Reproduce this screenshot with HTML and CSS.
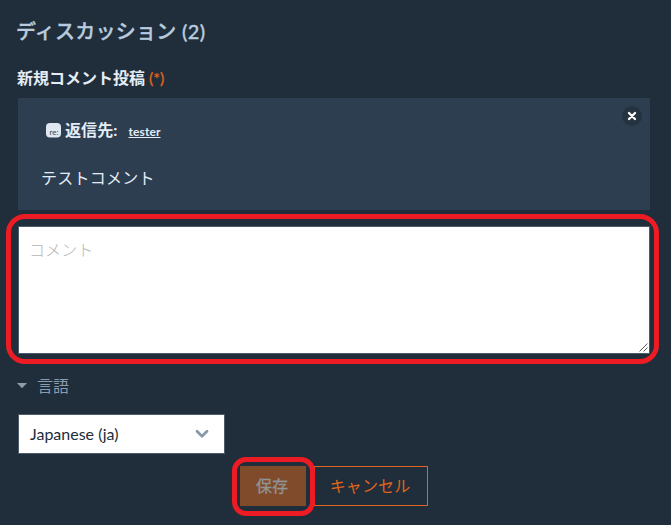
FILE: index.html
```html
<!DOCTYPE html>
<html lang="ja">
<head>
<meta charset="utf-8">
<title>ディスカッション</title>
<link rel="stylesheet" href="styles.css">
</head>
<body>
<main class="discussion">
  <h2 class="title">ディスカッション <span class="count">(2)</span></h2>
  <form class="form">
    <div class="label">新規コメント投稿 <span class="required">(*)</span></div>
    <section class="quote">
      <div class="reply">
        <svg class="reply-icon" width="15" height="15" viewBox="0 0 15 15"><rect width="15" height="14.5" rx="4" fill="#dfe7f0"/><text x="3.5" y="11.5" class="reply-glyph">re:</text></svg>
        <span class="reply-label">返信先:</span>
        <a class="user">tester</a>
      </div>
      <p class="quote-text">テストコメント</p>
      <button type="button" class="close" aria-label="閉じる">
        <svg width="20" height="20" viewBox="0 0 20 20"><circle cx="10" cy="10" r="10" fill="#253341"/><path d="M7 7l6 6M13 7l-6 6" stroke="#fff" stroke-width="2.3" stroke-linecap="round"/></svg>
      </button>
    </section>
    <div class="comment">
      <div class="field">コメント
        <svg class="grip" width="9" height="9" viewBox="0 0 9 9"><path d="M.5 8.5l8-8M4.5 8.5l4-4" stroke="#555" stroke-width="1"/></svg>
      </div>
      <span class="ring ring-comment"></span>
    </div>
    <div class="language"><svg width="10" height="6" viewBox="0 0 10 6"><path d="M0 0h10L5 5.3z" fill="#8b9caf"/></svg><span>言語</span></div>
    <div class="select"><span>Japanese (ja)</span><svg width="14" height="10" viewBox="0 0 14 10"><path d="M2 2.3l5 5 5-5" fill="none" stroke="#8798aa" stroke-width="2.7" stroke-linecap="round" stroke-linejoin="round"/></svg></div>
    <div class="actions">
      <div class="save-wrap"><button type="button" class="button save">保存</button><span class="ring ring-save"></span></div>
      <button type="button" class="button cancel">キャンセル</button>
    </div>
  </form>
</main>
</body>
</html>
```
FILE: styles.css
```css
* { box-sizing: border-box; }
body {
  margin: 0;
  background: #202d3a;
  color: #e4edf6;
  font: 16px/24px Lato, "Noto Sans CJK JP", sans-serif;
}
.discussion { height: 525px; padding: 16px 21px 0 18px; overflow: hidden; }
.title {
  margin: 0 0 0 -2px;
  color: #b8cbdf;
  font-size: 20px;
  line-height: 30px;
  font-weight: 500;
  letter-spacing: .25px;
  -webkit-text-stroke: .35px currentColor;
  white-space: nowrap;
}
.count { letter-spacing: .4px; }
.form { display: flex; flex-direction: column; }
.label { margin: 20px 0 8px -1px; font-weight: 700; }
.required { color: #e0651c; font-weight: 400; -webkit-text-stroke: .25px currentColor; }
.quote {
  position: relative;
  height: 112px;
  padding: 20px 24px 0 23px;
  background: #2c3e4f;
}
.reply { display: flex; align-items: center; height: 24px; padding-left: 5px; }
.reply-glyph { font: 400 8px Lato, sans-serif; fill: #34475a; }
.reply-label { margin-left: 4px; font-weight: 700; letter-spacing: .1px; }
.user { margin: 3px 0 0 11px; font-size: 12px; font-weight: 700; letter-spacing: .1px; text-decoration: underline; }
.quote-text { margin: 24px 0 0; letter-spacing: .25px; }
.close {
  position: absolute;
  top: 8px;
  right: 8px;
  width: 20px;
  height: 20px;
  padding: 0;
  border: 0;
  background: none;
}
.close svg { display: block; }
.comment { position: relative; margin-top: 16px; }
.field {
  position: relative;
  height: 128px;
  padding: 11px 10px;
  border: 1px solid #4c5c6b;
  background: #fff;
  color: #b5b5b5;
  font-weight: 300;
  letter-spacing: .1px;
}
.grip { position: absolute; right: 1px; bottom: 1px; }
.ring { position: absolute; border: 5px solid #ed1c24; pointer-events: none; }
.ring-comment { inset: -12px -9px -10px -12px; border-radius: 19px; }
.language {
  display: flex;
  align-items: center;
  gap: 10px;
  height: 24px;
  margin: 20px 0 16px -1px;
  color: #8b9caf;
}
.select {
  display: flex;
  align-items: center;
  justify-content: space-between;
  width: 207px;
  height: 40px;
  padding: 0 15px 0 11px;
  border: 1px solid #4c5c6b;
  background: #fff;
  color: #202d3a;
}
.actions { display: flex; justify-content: center; gap: 8px; margin-top: 12px; }
.save-wrap { position: relative; }
.button { display: block; height: 40px; padding: 0 2px 0 0; border: 0; font: inherit; }
.save { width: 66px; background: #804b2a; color: #929496; -webkit-text-stroke: .3px currentColor; }
.cancel { width: 114px; border: 1px solid #e0651c; background: none; color: #e0651c; letter-spacing: .1px; }
.ring-save { inset: -9px -9px -10px -8px; border-radius: 14px; }
```
